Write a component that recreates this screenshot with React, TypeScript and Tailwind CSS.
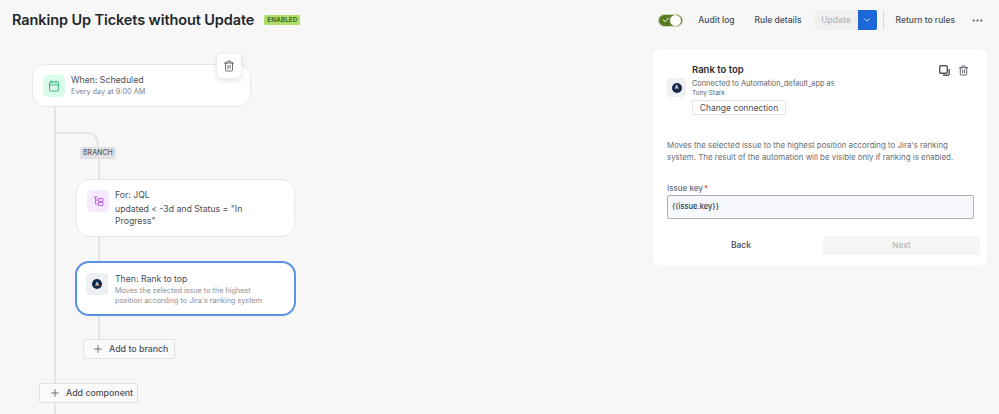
import { Calendar, Check, ChevronDown, Ellipsis, Plus, Trash2 } from "lucide-react";

const AppBadge = ({ className }: { className: string }) => (
    <div className={`flex shrink-0 items-center justify-center rounded-[4px] bg-[#eef0f3] ${className}`}>
        <div className="flex h-[10px] w-[10px] items-center justify-center rounded-full bg-[#14284b] text-[5px] font-semibold leading-none text-white">
            A
        </div>
    </div>
);

const AddButton = ({ label, className }: { label: string; className: string }) => (
    <button className={`flex h-[20px] items-center whitespace-nowrap rounded-[2px] border border-[#dfe1e4] bg-[#fafafa] text-[8.8px] font-medium text-[#4d5157] ${className}`}>
        <Plus size={12} strokeWidth={1.6} className="mr-[5px]" />
        {label}
    </button>
);

const BranchIcon = () => (
    <svg width="11" height="10" viewBox="0 0 11 10" fill="none" stroke="#c46ae6" strokeWidth="1.1">
        <path d="M0.5 1h4M2.5 1v7h2.5M2.5 4h2.5" />
        <rect x="5.5" y="2.5" width="4.5" height="3" rx="0.8" />
        <rect x="5.5" y="6.5" width="4.5" height="3" rx="0.8" />
    </svg>
);

const CopyIcon = () => (
    <svg width="11" height="11" viewBox="0 0 11 11" fill="none" stroke="#55585d" strokeWidth="1.4">
        <rect x="0.7" y="0.7" width="7.6" height="7.6" rx="1.2" />
        <path d="M10.2 4v4.5a1.7 1.7 0 0 1-1.7 1.7H4" />
    </svg>
);

const Header = () => (
    <header className="flex h-[40px] items-center pl-[12px] pr-[15px]">
        <h1 className="text-[14.5px] font-semibold tracking-[-0.1px] text-[#24272b]">Rankinp Up Tickets without Update</h1>
        <span className="ml-[10px] rounded-[2px] bg-[#aedb63] px-[3px] text-[6.2px] font-semibold leading-[10px] tracking-[0.2px] text-[#3f5a1c]">
            ENABLED
        </span>
        <div className="ml-auto flex items-center text-[8.5px] font-medium text-[#4a4e54]">
            <div className="flex h-[13px] w-[25px] items-center justify-between rounded-full border border-[#c9d6b0] bg-[#5a7d24] pl-[3px] pr-[1px]">
                <Check size={8} strokeWidth={3} className="text-white" />
                <span className="h-[11px] w-[11px] rounded-full bg-white" />
            </div>
            <span className="ml-[15px]">Audit log</span>
            <span className="ml-[20px]">Rule details</span>
            <span className="ml-[13px] flex h-[20px] w-[43px] items-center justify-center rounded-l-[2px] bg-[#f0f0f0] text-[#b4b6b9]">
                Update
            </span>
            <span className="flex h-[20px] w-[19px] items-center justify-center rounded-r-[2px] bg-[#1b67d8] text-white">
                <ChevronDown size={10} strokeWidth={2} />
            </span>
            <span className="ml-[6px] h-[20px] w-[1px] bg-[#d8d9db]" />
            <span className="ml-[12px]">Return to rules</span>
            <Ellipsis size={13} className="ml-[16px] text-[#4a4e54]" />
        </div>
    </header>
);

const Flow = () => (
    <section className="relative h-[374px] w-[653px]">
        {/* connector lines */}
        <div className="absolute left-[54px] top-[67px] h-[318px] w-[2px] bg-[#e3e4e6]" />
        <div className="absolute left-[55px] top-[92px] h-[20px] w-[44px] rounded-tr-[12px] border-r-2 border-t-2 border-[#e3e4e6]" />
        <div className="absolute left-[98px] top-[110px] h-[190px] w-[2px] bg-[#e3e4e6]" />

        <div className="absolute left-[80px] top-[107px] rounded-[2px] bg-[#dfe1e4] px-[3px] text-[7px] font-medium leading-[12px] text-[#5b5f66]">
            BRANCH
        </div>

        <div className="absolute left-[32px] top-[24px] flex h-[43px] w-[219px] items-center gap-[6px] rounded-[14px] border border-[#e8e8e8] bg-white pl-[10px]">
            <div className="flex h-[22px] w-[22px] items-center justify-center rounded-[5px] bg-[#d8fbea]">
                <Calendar size={12} strokeWidth={1.7} className="text-[#2fa876]" />
            </div>
            <div>
                <p className="text-[8.7px] leading-[12px] text-[#4a4e54]">When: Scheduled</p>
                <p className="mt-[1px] text-[7.3px] leading-[10px] text-[#7d8187]">Every day at 9:00 AM</p>
            </div>
        </div>
        <div className="absolute left-[217px] top-[14px] flex h-[24px] w-[24px] items-center justify-center rounded-[5px] bg-white shadow-[0_2px_6px_rgba(0,0,0,0.14)]">
            <Trash2 size={12} strokeWidth={1.6} className="text-[#45484d]" />
        </div>

        <div className="absolute left-[76px] top-[139px] flex h-[58px] w-[219px] gap-[6px] rounded-[14px] border border-[#e8e8e8] bg-white pl-[10px] pt-[10px]">
            <div className="flex h-[22px] w-[22px] shrink-0 items-center justify-center rounded-[5px] bg-[#f6e9fd]">
                <BranchIcon />
            </div>
            <div className="text-[8.7px] leading-[12.5px] text-[#4a4e54]">
                <p className="-mt-[1px]">For: JQL</p>
                <p className="mt-[1px] w-[150px]">updated &lt; -3d and Status = "In Progress"</p>
            </div>
        </div>

        <div className="absolute left-[75px] top-[221px] flex h-[55px] w-[221px] gap-[7px] rounded-[14px] border-2 border-[#5b93e4] bg-white pl-[9px] pt-[10px]">
            <AppBadge className="h-[22px] w-[22px]" />
            <div>
                <p className="text-[8.7px] leading-[12px] text-[#4a4e54]">Then: Rank to top</p>
                <p className="mt-[1px] text-[7.25px] leading-[10px] text-[#8a8e94]">
                    Moves the selected issue to the highest
                    <br />
                    position according to Jira's ranking system
                </p>
            </div>
        </div>

        <AddButton label="Add to branch" className="absolute left-[83px] top-[299px] w-[92px] pl-[8px]" />
        <AddButton label="Add component" className="absolute left-[39px] top-[343px] w-[99px] pl-[9px]" />
    </section>
);

const Panel = () => (
    <aside className="mt-[9px] h-[216px] w-[334px] rounded-[6px] bg-white pl-[14px] pr-[7px] pt-[14px]">
        <div className="flex">
            <AppBadge className="mt-[15px] h-[19px] w-[19px]" />
            <div className="ml-[6px]">
                <p className="text-[9.5px] font-semibold leading-[14px] text-[#2a2d31]">Rank to top</p>
                <p className="mt-[2px] text-[7.35px] leading-[10px] text-[#5b5f66]">Connected to Automation_default_app as</p>
                <p className="text-[6.5px] leading-[8px] text-[#5b5f66]">Tony Stark</p>
                <button className="mt-[3px] block h-[15px] w-[94px] rounded-[1px] border border-[#e3e4e6] text-[8.5px] leading-[12px] text-[#4a4e54]">
                    Change connection
                </button>
            </div>
            <div className="ml-auto mr-[11px] mt-[2px] flex h-[11px] gap-[8px] text-[#55585d]">
                <CopyIcon />
                <Trash2 size={11} strokeWidth={2} />
            </div>
        </div>
        <p className="mt-[24px] w-[300px] text-[7.9px] leading-[12px] text-[#6a6e74]">
            Moves the selected issue to the highest position according to Jira's ranking system. The result of the automation will be visible only if ranking is enabled.
        </p>
        <label className="mt-[19px] block text-[8px] font-medium leading-[12px] text-[#626f86]">
            Issue key<span className="ml-[1px] text-[#d9432a]">*</span>
        </label>
        <div className="mt-[1px] flex h-[24px] w-[307px] items-center rounded-[2px] border border-[#a9afbb] bg-[#f7f8fb] pl-[4px] text-[7.5px] font-medium text-[#2d3a55]">
            {"{{issue.key}}"}
        </div>
        <div className="mt-[17px] flex items-center">
            <span className="w-[148px] text-center text-[8.5px] font-medium text-[#4a4e54]">Back</span>
            <span className="ml-[8px] flex h-[19px] w-[157px] items-center justify-center rounded-[2px] bg-[#f5f5f5] text-[8.2px] font-medium text-[#b4b6b9]">
                Next
            </span>
        </div>
    </aside>
);

export default function App() {
    return (
        <div className="h-[414px] w-[999px] overflow-hidden bg-[#f7f7f7] font-['Inter',sans-serif]">
            <Header />
            <div className="flex">
                <Flow />
                <Panel />
            </div>
        </div>
    );
}
